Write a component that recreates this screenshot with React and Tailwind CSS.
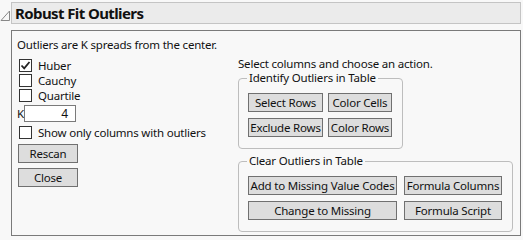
import React from 'react';

const Check = ({ checked }) => (
  <span className="w-[13px] h-[13px] border border-[#333] bg-white flex items-center justify-center shrink-0">
    {checked && (
      <svg width="11" height="11" viewBox="0 0 11 11">
        <path d="M1.5 5.5 L4.2 8.3 L9.5 2" fill="none" stroke="#222" strokeWidth="1.8" />
      </svg>
    )}
  </span>
);

const Btn = ({ children, w }) => (
  <button className={`h-[19px] border border-[#707070] bg-[#dddddd] text-[11.5px] tracking-[-0.2px] leading-none whitespace-nowrap flex items-center justify-center ${w}`}>
    {children}
  </button>
);

const Group = ({ title, className, children }) => (
  <fieldset className={`border border-[#bdbdbd] rounded-[4px] px-[9px] pt-[7px] ${className}`}>
    <legend className="ml-[-1px] px-[2px] text-[11.5px] tracking-[-0.2px] leading-[14px] whitespace-nowrap">{title}</legend>
    {children}
  </fieldset>
);

export default function App() {
  return (
    <div className="w-[523px] h-[240px] bg-[#f8f8f8] text-[#111] pt-[2px]" style={{ fontFamily: '"Noto Sans", "Open Sans", sans-serif' }}>
      <div className="flex items-center">
        <svg width="11" height="22" viewBox="0 0 11 22" className="shrink-0">
          <path d="M9.5 9 L9.5 18.5 L1 18.5 Z" fill="none" stroke="#888" strokeWidth="1" />
        </svg>
        <div className="w-[510px] h-[22px] bg-[#ebebeb] border border-[#c4c4c4] flex items-center pl-[3px]">
          <span className="text-[15px] font-bold leading-none tracking-[-0.6px]">Robust Fit Outliers</span>
        </div>
      </div>
      <div className="ml-[11px] mt-[6px] w-[510px] h-[206px] border border-[#7a7a7a] bg-[#f8f8f8] flex text-[11.5px] tracking-[-0.2px] whitespace-nowrap">
        <div className="w-[219px] pl-[5px] pt-[6px]">
          <div className="leading-[16px]">Outliers are K spreads from the center.</div>
          <div className="mt-[6px] pl-[2px] flex flex-col gap-[2px]">
            <label className="flex items-center gap-[6px] h-[13px] leading-none"><Check checked />Huber</label>
            <label className="flex items-center gap-[6px] h-[13px] leading-none"><Check />Cauchy</label>
            <label className="flex items-center gap-[6px] h-[13px] leading-none"><Check />Quartile</label>
          </div>
          <div className="mt-[3px] flex items-center">
            <span className="w-[7px] leading-none">K</span>
            <div className="w-[52px] h-[17px] border border-[#7a7a7a] bg-white flex items-center justify-end pr-[7px] leading-none text-[12px]">4</div>
          </div>
          <label className="mt-[4px] pl-[2px] flex items-center gap-[6px] h-[13px] leading-none"><Check />Show only columns with outliers</label>
          <div className="mt-[5px] pl-[1px] flex flex-col gap-[5px]">
            <Btn w="w-[60px]">Rescan</Btn>
            <Btn w="w-[60px]">Close</Btn>
          </div>
        </div>
        <div className="flex-1 pt-[26px] pl-[7px]">
          <div className="leading-[14px]">Select columns and choose an action.</div>
          <Group title="Identify Outliers in Table" className="w-[165px] h-[78px]">
            <div className="grid grid-cols-[75px_64px] gap-x-[5px] gap-y-[6px] mt-[1px]">
              <Btn w="w-[75px]">Select Rows</Btn>
              <Btn w="w-[64px]">Color Cells</Btn>
              <Btn w="w-[75px]">Exclude Rows</Btn>
              <Btn w="w-[64px]">Color Rows</Btn>
            </div>
          </Group>
          <Group title="Clear Outliers in Table" className="w-[275px] h-[78px] mt-[5px]">
            <div className="grid grid-cols-[149px_98px] gap-x-[7px] gap-y-[6px] mt-[1px]">
              <Btn w="w-[149px]">Add to Missing Value Codes</Btn>
              <Btn w="w-[98px]">Formula Columns</Btn>
              <Btn w="w-[149px]">Change to Missing</Btn>
              <Btn w="w-[98px]">Formula Script</Btn>
            </div>
          </Group>
        </div>
      </div>
    </div>
  );
}
